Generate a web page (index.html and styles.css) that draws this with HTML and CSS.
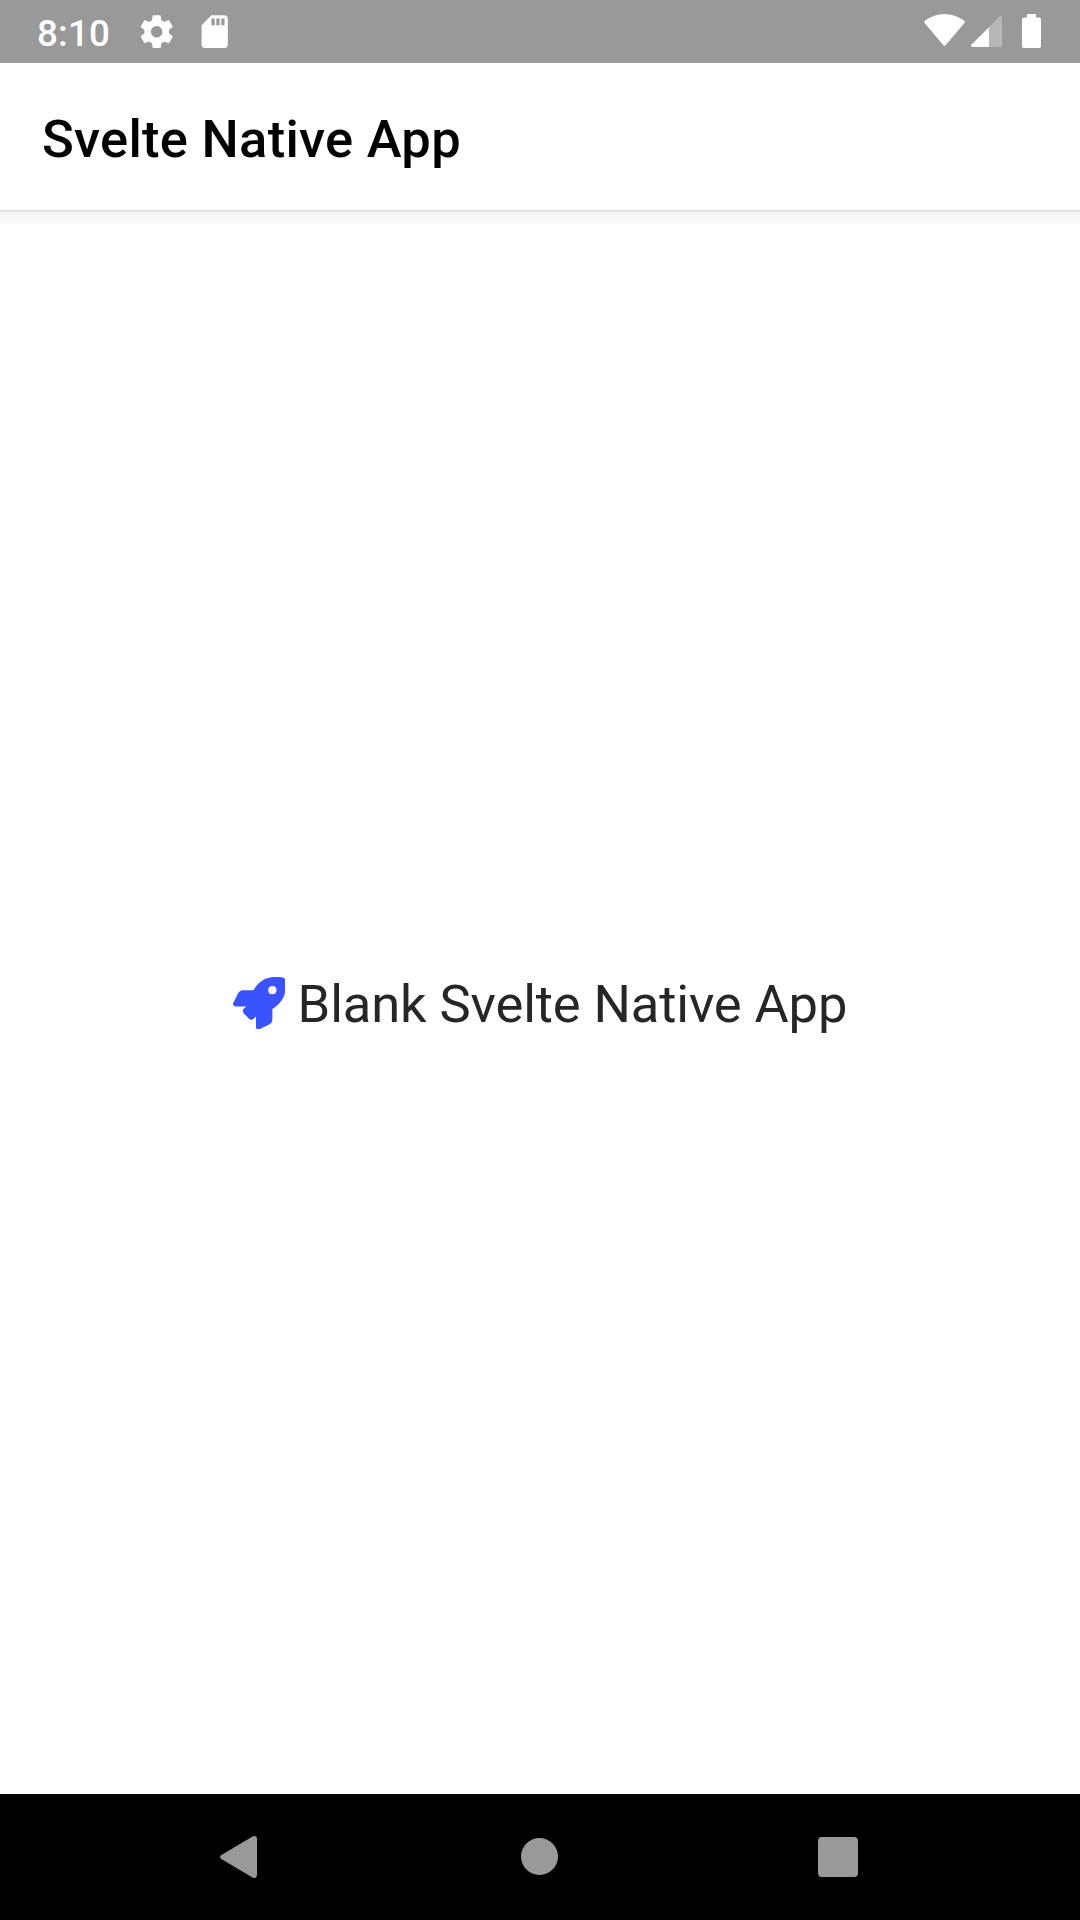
FILE: index.html
```html
<!DOCTYPE html>
<html lang="en">
<head>
<meta charset="utf-8">
<title>Svelte Native App</title>
<link rel="stylesheet" href="styles.css">
</head>
<body>
<div class="screen">
  <header class="status-bar">
    <span class="clock">8:10</span>
    <svg class="settings" viewBox="0 0 24 24"><path d="M19.43 12.98c.04-.32.07-.64.07-.98s-.03-.66-.07-.98l2.11-1.65c.19-.15.24-.42.12-.64l-2-3.46c-.12-.22-.39-.3-.61-.22l-2.49 1c-.52-.4-1.08-.73-1.69-.98l-.38-2.65C14.46 2.18 14.25 2 14 2h-4c-.25 0-.46.18-.49.42l-.38 2.65c-.61.25-1.17.59-1.69.98l-2.49-1c-.23-.09-.49 0-.61.22l-2 3.46c-.13.22-.07.49.12.64l2.11 1.65c-.04.32-.07.65-.07.98s.03.66.07.98l-2.11 1.65c-.19.15-.24.42-.12.64l2 3.46c.12.22.39.3.61.22l2.49-1c.52.4 1.08.73 1.69.98l.38 2.65c.03.24.24.42.49.42h4c.25 0 .46-.18.49-.42l.38-2.65c.61-.25 1.17-.59 1.69-.98l2.49 1c.23.09.49 0 .61-.22l2-3.46c.12-.22.07-.49-.12-.64l-2.11-1.65zM12 15.500c-1.930 0-3.500-1.570-3.500-3.500s1.570-3.500 3.500-3.500 3.500 1.570 3.500 3.500-1.570 3.500-3.500 3.500z"/></svg>
    <svg class="sd-card" viewBox="0 0 24 24"><path d="M18 2h-8L4 8v12c0 1.100.9 2 2 2h12c1.100 0 2-.9 2-2V4c0-1.100-.9-2-2-2z"/><path class="contacts" d="M10 4h2v4h-2zM13 4h2v4h-2zM16 4h2v4h-2z"/></svg>
    <div class="system">
      <svg class="wifi" viewBox="0 0 41 32"><path d="M1 6.500C7 2.200 13.600 0 20.500 0S34 2.200 40 6.500Q41.300 7.800 40.200 9.200L21.800 31Q20.500 32.300 19.200 31L.8 9.200Q-.3 7.800 1 6.500z"/></svg>
      <svg class="signal" viewBox="0 0 31 31"><path class="faint" d="M18 11.200L28.300.8Q29-.1 30-.1Q31.100.2 31.100 1.600V29Q31.100 31 29 31H18z"/><path d="M18 11.200V31H1.600Q0 30.900 0 29.700Q0 29.100.6 28.500z"/></svg>
      <svg class="battery" viewBox="0 0 19 34"><path d="M5 0h9v3.500h3.300Q19 3.500 19 5.200V32.200Q19 34 17.300 34H1.700Q0 34 0 32.200V5.200Q0 3.500 1.700 3.500H5z"/></svg>
    </div>
  </header>
  <div class="action-bar"><h1 class="title">Svelte Native App</h1></div>
  <main class="content">
    <svg class="rocket" viewBox="0 0 512 512"><path d="M505.12 19.094c-1.189-5.531-6.658-11-12.207-12.188C460.716 0 435.507 0 410.407 0 307.175 0 245.269 55.203 199.052 128H94.838c-16.348.016-35.557 11.875-42.887 26.484L2.516 253.297A28.400 28.400 0 0 0 0 264a24.009 24.009 0 0 0 24.006 24h103.810l-22.474 22.469c-11.365 11.361-12.996 32.258 0 45.250l50.904 50.906c11.156 11.188 32.156 13.156 45.277 0l22.475-22.469V488a24.009 24.009 0 0 0 24.006 24 28.559 28.559 0 0 0 10.707-2.516l98.728-49.390c14.629-7.297 26.508-26.500 26.508-42.860V312.797c72.598-46.313 128.035-108.406 128.035-211.094C512.075 76.500 512.075 51.297 505.120 19.094zM384.040 168A40 40 0 1 1 424.050 128 40.023 40.023 0 0 1 384.040 168z"/></svg>
    <span class="message">Blank Svelte Native App</span>
  </main>
  <nav class="nav-bar">
    <svg class="back" viewBox="0 0 37 42"><path d="M1.400 19.100L32.500.6Q37 -1.200 37 3.500V38.500Q37 43.200 32.500 41.400L1.400 22.900Q-1.400 21 1.400 19.100z"/></svg>
    <span class="home"></span>
    <span class="recents"></span>
  </nav>
</div>
</body>
</html>
```
FILE: styles.css
```css
* {
  box-sizing: border-box;
}

body {
  margin: 0;
  font-family: Roboto, sans-serif;
  background: #fff;
}

svg {
  display: block;
  flex: none;
  fill: #fff;
}

.screen {
  display: flex;
  flex-direction: column;
  width: 1080px;
  height: 1920px;
}

.status-bar {
  display: flex;
  flex: none;
  height: 63px;
  padding: 0 39px 0 37px;
  background: #999;
}

.clock {
  width: 100.4px;
  padding-top: 12px;
  color: #fff;
  font-size: 36.75px;
  font-weight: 500;
  line-height: 43px;
  letter-spacing: .2px;
}

.settings,
.sd-card {
  width: 39.375px;
  height: 39.375px;
  margin-top: 12px;
}

.sd-card {
  margin-left: 18.6px;
}

.contacts {
  fill: #999;
}

.system {
  display: flex;
  align-items: flex-start;
  margin-left: auto;
  padding-top: 14px;
}

.wifi {
  width: 41px;
  height: 32px;
}

.signal {
  width: 31px;
  height: 31px;
  margin: 2px 20px 0 6px;
}

.faint {
  fill: #b8b8b8;
}

.battery {
  width: 19px;
  height: 34px;
}

.action-bar {
  display: flex;
  flex: none;
  align-items: center;
  height: 147px;
  padding: 5px 42px 0;
  background: #fff;
}

.title {
  margin: 0;
  color: #000;
  font-size: 52.5px;
  font-weight: 500;
  line-height: 62px;
  letter-spacing: .27px;
}

.content {
  display: flex;
  flex: 1;
  align-items: center;
  justify-content: center;
  gap: 12.4px;
  background: linear-gradient(#dcdcdc, #ebebeb 2px, #f4f4f4 4px, #fafafa 9px, #fff 16px);
}

.rocket {
  width: 52.5px;
  height: 52.5px;
  margin-top: 2px;
  fill: #3a53ff;
}

.message {
  padding-top: 4px;
  color: #262626;
  font-size: 52.5px;
  line-height: 62px;
  letter-spacing: -.13px;
}

.nav-bar {
  display: flex;
  flex: none;
  align-items: center;
  justify-content: space-between;
  height: 126px;
  padding: 0 222px 0 220px;
  background: #000;
}

.back {
  width: 37px;
  height: 42px;
  fill: #999;
}

.home {
  width: 37px;
  height: 37px;
  margin: 0 0 2px 4px;
  border-radius: 50%;
  background: #999;
}

.recents {
  width: 40px;
  height: 40px;
  border-radius: 4px;
  background: #999;
}
```
